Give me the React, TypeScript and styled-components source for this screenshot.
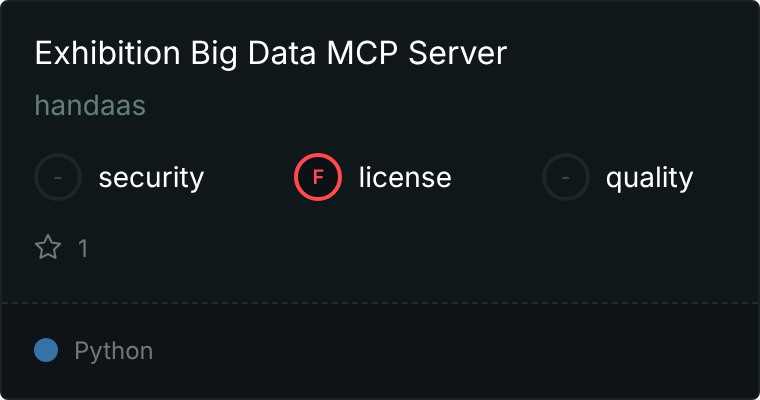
import styled, { createGlobalStyle } from "styled-components";

const GlobalStyle = createGlobalStyle`
  html, body {
    margin: 0;
    padding: 0;
    background: #fff;
  }
`;

const scores = [
  { grade: "-", label: "security" },
  { grade: "F", label: "license" },
  { grade: "-", label: "quality" },
];

const App = () => {
  return (
    <>
      <GlobalStyle />
      <Card>
        <Body>
          <Title>Exhibition Big Data MCP Server</Title>
          <Author>handaas</Author>
          <Scores>
            {scores.map((score) => (
              <Score key={score.label}>
                <Grade $failed={score.grade === "F"}>{score.grade}</Grade>
                <ScoreLabel>{score.label}</ScoreLabel>
              </Score>
            ))}
          </Scores>
          <Stars>
            <StarIcon viewBox="0 0 24 24" fill="none" stroke="currentColor" strokeWidth="1.8" strokeLinecap="round" strokeLinejoin="round">
              <path d="M12 1.6l3.2 6.5 7.2 1.05-5.2 5.07 1.23 7.16L12 18l-6.43 3.38 1.23-7.16L1.6 9.15l7.2-1.05L12 1.6z" />
            </StarIcon>
            <span>1</span>
          </Stars>
        </Body>
        <Footer>
          <LanguageDot />
          <Language>Python</Language>
        </Footer>
      </Card>
    </>
  );
};

export default App;

const Card = styled.div`
  box-sizing: border-box;
  width: 760px;
  height: 400px;
  display: flex;
  flex-direction: column;
  background: #10171a;
  border: 2px solid #1a2225;
  border-radius: 8px;
  overflow: hidden;
  font-family: Inter, "Liberation Sans", sans-serif;
  text-rendering: geometricPrecision;
  will-change: transform;
`;

const Body = styled.div`
  flex: 1;
  padding: 32px 32px 0;
`;

const Title = styled.h1`
  margin: 0;
  font-size: 32px;
  font-weight: 400;
  line-height: 38px;
  color: #fff;
`;

const Author = styled.div`
  margin-top: 17px;
  font-size: 28px;
  line-height: 32px;
  color: #5f7f78;
`;

const Scores = styled.div`
  display: flex;
  justify-content: space-between;
  margin-top: 32px;
  padding-right: 32px;
`;

const Score = styled.div`
  display: flex;
  align-items: center;
  gap: 16px;
`;

const Grade = styled.div<{ $failed: boolean }>`
  box-sizing: border-box;
  width: 48px;
  height: 48px;
  display: flex;
  align-items: center;
  justify-content: center;
  border-radius: 50%;
  border: 4px solid ${(p) => (p.$failed ? "#ff4a4d" : "#1d2529")};
  background: ${(p) => (p.$failed ? "#0b1114" : "transparent")};
  color: ${(p) => (p.$failed ? "#ff4a4d" : "#3d4447")};
  font-size: 20px;
  font-weight: 600;
`;

const ScoreLabel = styled.span`
  font-size: 28px;
  line-height: 34px;
  color: #fff;
`;

const Stars = styled.div`
  display: flex;
  align-items: center;
  gap: 16px;
  margin-top: 33px;
  color: #70777a;
  font-size: 24px;
`;

const StarIcon = styled.svg`
  width: 28px;
  height: 28px;
  margin-top: -3px;
`;

const Footer = styled.div`
  box-sizing: border-box;
  height: 96px;
  display: flex;
  align-items: center;
  gap: 16px;
  padding: 0 32px 2px;
  background: #0d1316;
  border-top: 2px dashed #232b2e;
`;

const LanguageDot = styled.span`
  width: 24px;
  height: 24px;
  border-radius: 50%;
  background: #3572a5;
`;

const Language = styled.span`
  font-size: 24px;
  color: #70777a;
`;
